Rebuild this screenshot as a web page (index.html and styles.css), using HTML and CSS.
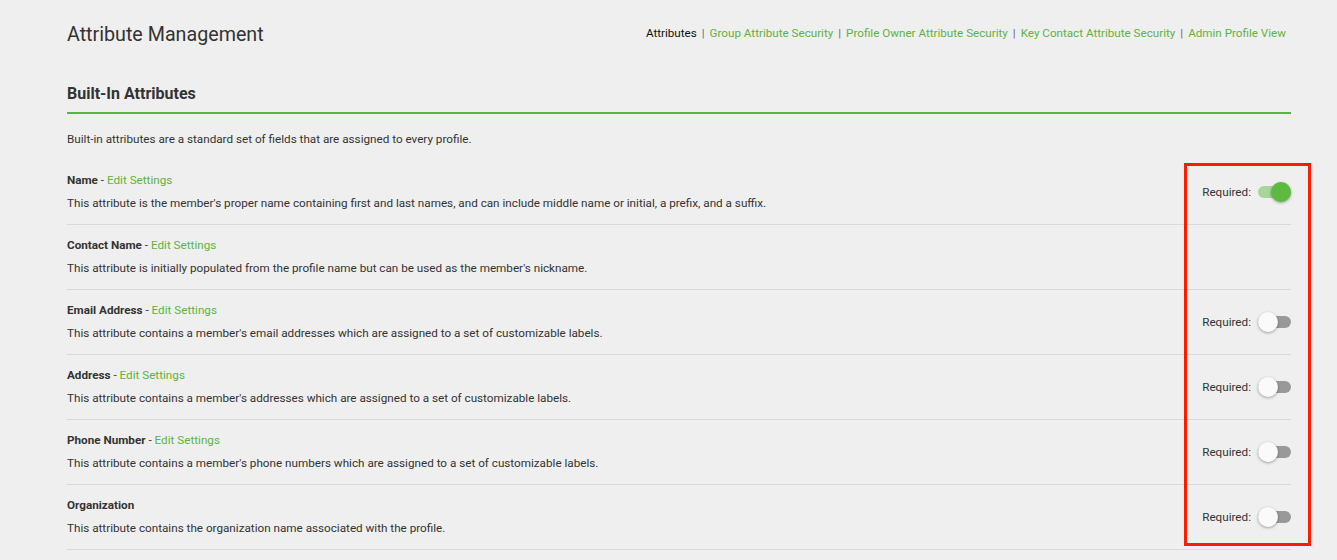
FILE: index.html
```html
<!DOCTYPE html>
<html>
<head>
<meta charset="utf-8">
<link rel="stylesheet" href="styles.css">
</head>
<body>
<div class="page">
  <header class="topbar">
    <h1 class="title">Attribute Management</h1>
    <nav class="nav">
      <span class="nav-current">Attributes</span><span class="sep">|</span><a href="#">Group Attribute Security</a><span class="sep">|</span><a href="#">Profile Owner Attribute Security</a><span class="sep">|</span><a href="#">Key Contact Attribute Security</a><span class="sep">|</span><a href="#">Admin Profile View</a>
    </nav>
  </header>

  <section class="section">
    <h2 class="section-title">Built-In Attributes</h2>
    <p class="intro">Built-in attributes are a standard set of fields that are assigned to every profile.</p>

    <div class="list">
      <div class="row">
        <div class="info">
          <div class="name"><b>Name</b> - <a href="#">Edit Settings</a></div>
          <div class="desc">This attribute is the member's proper name containing first and last names, and can include middle name or initial, a prefix, and a suffix.</div>
        </div>
        <div class="req"><span>Required:</span><span class="toggle on"><span class="knob"></span></span></div>
      </div>
      <div class="row">
        <div class="info">
          <div class="name"><b>Contact Name</b> - <a href="#">Edit Settings</a></div>
          <div class="desc">This attribute is initially populated from the profile name but can be used as the member's nickname.</div>
        </div>
      </div>
      <div class="row">
        <div class="info">
          <div class="name"><b>Email Address</b> - <a href="#">Edit Settings</a></div>
          <div class="desc">This attribute contains a member's email addresses which are assigned to a set of customizable labels.</div>
        </div>
        <div class="req"><span>Required:</span><span class="toggle"><span class="knob"></span></span></div>
      </div>
      <div class="row">
        <div class="info">
          <div class="name"><b>Address</b> - <a href="#">Edit Settings</a></div>
          <div class="desc">This attribute contains a member's addresses which are assigned to a set of customizable labels.</div>
        </div>
        <div class="req"><span>Required:</span><span class="toggle"><span class="knob"></span></span></div>
      </div>
      <div class="row">
        <div class="info">
          <div class="name"><b>Phone Number</b> - <a href="#">Edit Settings</a></div>
          <div class="desc">This attribute contains a member's phone numbers which are assigned to a set of customizable labels.</div>
        </div>
        <div class="req"><span>Required:</span><span class="toggle"><span class="knob"></span></span></div>
      </div>
      <div class="row">
        <div class="info">
          <div class="name"><b>Organization</b></div>
          <div class="desc">This attribute contains the organization name associated with the profile.</div>
        </div>
        <div class="req"><span>Required:</span><span class="toggle"><span class="knob"></span></span></div>
      </div>
    </div>
    <div class="highlight"></div>
  </section>
</div>
</body>
</html>
```

FILE: styles.css
```css
* { box-sizing: border-box; }
html, body { margin: 0; padding: 0; }
body {
  background: #efefef;
  font-family: Roboto, "Liberation Sans", Arial, sans-serif;
  color: #333;
  font-size: 11.7px;
}
a { color: #5db33f; text-decoration: none; }
.page {
  padding: 0 46px 0 67px;
}
.topbar {
  display: flex;
  justify-content: space-between;
  align-items: center;
  padding-top: 22px;
  height: 47px;
}
.title {
  margin: 0;
  font-size: 19.7px;
  font-weight: 400;
  line-height: 24px;
  color: #333;
}
.nav {
  font-size: 11.65px;
  line-height: 16px;
  padding-right: 5px;
  margin-top: -3px;
}
.nav-current { color: #111; }
.sep { color: #667; margin: 0 5px; }
.section { position: relative; padding-top: 37px; }
.section-title {
  margin: 0;
  font-size: 16px;
  font-weight: 700;
  line-height: 20px;
  color: #333;
  padding-bottom: 8px;
  border-bottom: 2px solid #5db33f;
}
.intro {
  margin: 17px 0 0;
  line-height: 16px;
}
.list { margin-top: 13px; }
.row {
  display: flex;
  align-items: center;
  justify-content: space-between;
  padding: 12px 0 13px;
  border-bottom: 1px solid #d9d9d9;
}
.name { line-height: 16px; }
.name b { font-weight: 700; color: #333; }
.desc { line-height: 16px; margin-top: 7px; }
.req {
  display: flex;
  align-items: center;
  gap: 7px;
}
.toggle {
  position: relative;
  width: 33px;
  height: 12px;
  border-radius: 6px;
  background: #999;
  display: inline-block;
}
.knob {
  position: absolute;
  top: -4px;
  left: 0;
  width: 20px;
  height: 20px;
  border-radius: 50%;
  background: #fafafa;
  box-shadow: 0 1px 3px rgba(0,0,0,0.35);
}
.toggle.on { background: #a6d69a; }
.toggle.on .knob { left: 13px; background: #5db93f; }
.highlight {
  position: absolute;
  left: 1117px;
  top: 116px;
  width: 127px;
  height: 383px;
  border: 3px solid #ff1a00;
  pointer-events: none;
}
```
